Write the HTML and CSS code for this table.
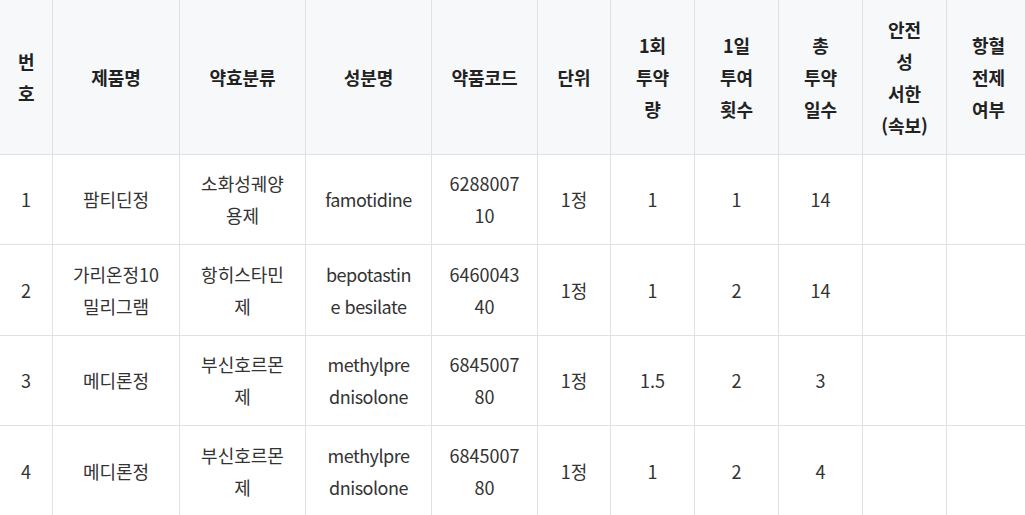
FILE: index.html
```html
<!DOCTYPE html>
<html lang="ko">
<head>
<meta charset="utf-8">
<link rel="stylesheet" href="styles.css">
</head>
<body>
<div class="wrap">
<table class="drug-table">
  <colgroup>
    <col class="c-no"><col class="c-name"><col class="c-class"><col class="c-ing"><col class="c-code"><col class="c-unit"><col class="c-n"><col class="c-n"><col class="c-n"><col class="c-n"><col class="c-n">
  </colgroup>
  <thead>
    <tr>
      <th>번호</th>
      <th>제품명</th>
      <th>약효분류</th>
      <th>성분명</th>
      <th class="code">약품코드</th>
      <th>단위</th>
      <th>1회 투약량</th>
      <th>1일 투여 횟수</th>
      <th>총 투약 일수</th>
      <th>안전성 서한 (속보)</th>
      <th>항혈 전제 여부</th>
    </tr>
  </thead>
  <tbody>
    <tr>
      <td>1</td><td>팜티딘정</td><td>소화성궤양용제</td><td class="latin">famotidine</td><td class="code">628800710</td><td>1정</td><td>1</td><td>1</td><td>14</td><td></td><td></td>
    </tr>
    <tr>
      <td>2</td><td>가리온정10밀리그램</td><td>항히스타민제</td><td class="latin">bepotastine besilate</td><td class="code">646004340</td><td>1정</td><td>1</td><td>2</td><td>14</td><td></td><td></td>
    </tr>
    <tr>
      <td>3</td><td>메디론정</td><td>부신호르몬제</td><td class="latin">methylprednisolone</td><td class="code">684500780</td><td>1정</td><td>1.5</td><td>2</td><td>3</td><td></td><td></td>
    </tr>
    <tr>
      <td>4</td><td>메디론정</td><td>부신호르몬제</td><td class="latin">methylprednisolone</td><td class="code">684500780</td><td>1정</td><td>1</td><td>2</td><td>4</td><td></td><td></td>
    </tr>
  </tbody>
</table>
</div>
</body>
</html>
```

FILE: styles.css
```css
html, body {
  margin: 0;
  padding: 0;
  background: #ffffff;
}
body {
  font-family: "Noto Sans CJK KR", "Noto Sans", sans-serif;
  font-size: 18px;
  color: #333333;
}
.wrap {
  width: 100%;
  overflow: hidden;
}
.drug-table {
  border-collapse: collapse;
  table-layout: fixed;
  width: 1030px;
  margin-top: -1px;
  margin-left: -1px;
}
.c-no { width: 53px; }
.c-name { width: 127px; }
.c-class { width: 126px; }
.c-ing { width: 126px; }
.c-code { width: 106px; }
.c-unit { width: 73px; }
.c-n { width: 84px; }
.drug-table th,
.drug-table td {
  border: 1px solid #e1e1e3;
  padding: 12.75px 18px;
  line-height: 32px;
  text-align: center;
  vertical-align: middle;
  word-break: keep-all;
  overflow-wrap: anywhere;
}
.drug-table th.code,
.drug-table td.code {
  padding-left: 16px;
  padding-right: 16px;
}
.drug-table td.latin {
  letter-spacing: -0.5px;
}
.drug-table th {
  background: #f7f8fa;
  font-weight: 700;
  color: #222222;
}
.drug-table td {
  font-weight: 400;
  color: #333333;
}
```
